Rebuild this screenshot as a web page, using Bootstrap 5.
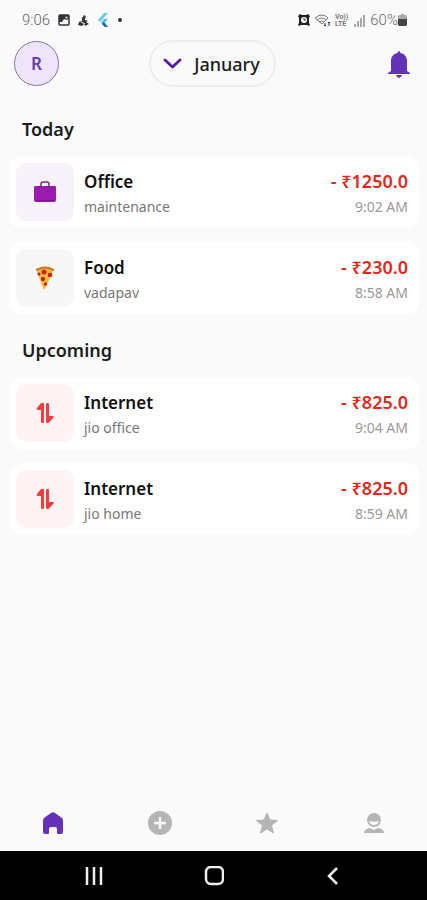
<!DOCTYPE html>
<html lang="en">
<head>
<meta charset="utf-8">
<meta name="viewport" content="width=device-width, initial-scale=1">
<title>Expenses</title>
<link href="https://cdn.jsdelivr.net/npm/bootstrap@5.3.0/dist/css/bootstrap.min.css" rel="stylesheet">
<style>
  body { background: #fafafa; color: #1b1b1b; font-family: "Noto Sans", "Open Sans", sans-serif; font-size: 16px; line-height: 24px; }
  svg { display: block; flex: none; }
  .status-strip { height: 40px; padding: 0 20px 0 22px; color: #666; font: 300 15px/20px Roboto, sans-serif; }
  .top-bar { height: 46px; display: grid; grid-template-columns: 1fr auto 1fr; align-items: center; padding: 0 16px 0 14px; }
  .avatar-btn { width: 45px; height: 45px; border: 1px solid #8a70b8; border-radius: 50%; background: #eee5fb; color: #6a3cb4; font-size: 17px; font-weight: 600; }
  .month-btn { height: 47px; border: 2px solid #eeedf3; border-radius: 24px; background: transparent; color: #1b1b1b; font-size: 18px; font-weight: 500; padding: 0 14px 0 12px; }
  .bell-btn { border: 0; background: none; padding: 0; justify-self: end; }
  .group-title { font-size: 18px; line-height: 24px; font-weight: 600; margin: 0 0 15px 13px; }
  .entries { padding: 31px 8px 0 9px; }
  .entry { background: #fff; border-radius: 12px; padding: 7px 11px 7px 7px; }
  .entry + .entry { margin-top: 14px; }
  .group + .group { margin-top: 24px; }
  .tile { width: 58px; height: 58px; border-radius: 10px; margin-right: 10px; }
  .tile-office { background: #f8f2fb; }
  .tile-food { background: #f7f7f7; }
  .tile-net { background: #fff3f5; }
  .entry-text { padding-top: 4px; line-height: 25px; }
  .entry-name { font-size: 17px; font-weight: 600; color: #111; }
  .entry-note { font-size: 14px; color: #777; }
  .entry-time { font-size: 14px; color: #999; }
  .entry-sum { font-size: 18px; font-weight: 600; color: #de2a1c; }
  .tabs a { color: #b5b5b5; height: 57px; }
  .tabs a.active { color: #6432b8; }
  .system-bar { background: #000; height: 49px; padding: 0 34px; }
  .system-bar button { border: 0; background: none; padding: 0; color: #eee; }
</style>
</head>
<body>
<div class="min-vh-100 d-flex flex-column">
  <div class="status-strip d-flex align-items-center justify-content-between">
    <div class="d-flex align-items-center">
      <span>9:06</span>
      <svg class="ms-2" width="12" height="12" viewBox="0 0 12 12"><rect x="1" y="1" width="10" height="10" rx="1" fill="none" stroke="#333" stroke-width="1.5"/><path d="M1 1h10v3L9 6 6 5 4 8H1z" fill="#333"/><circle cx="8.500" cy="3.500" r="1" fill="#fafafa"/></svg>
      <svg class="ms-2" width="11" height="13" viewBox="0 0 11 13"><path d="M6 1C9 2 7 4 7 6l3 1-2 1 3 2-4 2-1-2-2 2-4-1 1-3 3-1V4H3l2-1z" fill="#333"/><path d="M3 8l4 2" stroke="#fafafa"/></svg>
      <svg class="ms-2" width="12" height="15" viewBox="0 0 12 15"><path d="M7 0h4L3 9 1 7z" fill="#62c8f5"/><path d="M7 6h4L7 10l4 4H8L4 10z" fill="#4cb9ef"/><path d="M5 11l2-2 4 5H8z" fill="#1767a8"/></svg>
      <svg class="ms-2" width="6" height="6" viewBox="0 0 6 6"><circle cx="3" cy="3" r="2" fill="#333"/></svg>
    </div>
    <div class="d-flex align-items-center">
      <svg width="12" height="12" viewBox="0 0 12 12"><path d="M0 2l2-2 2 1h4l2-1 2 2-1 2v5l1 2-1 1-2-1H3l-2 1-1-1 1-2V4z" fill="#222"/><circle cx="6" cy="6" r="3" fill="#fafafa"/><path d="M6 4v2h2" fill="none" stroke="#222"/></svg>
      <svg class="ms-1" width="17" height="13" viewBox="0 0 17 13" fill="none" stroke="#777"><path d="M1 4q7-6 13 0L8 10z"/><path d="M3 6q5-4 9 0M5 8q3-2 5 0"/><path d="M11 9v3M10 11l1 1 1-1M15 12V8M14 9l1-1 1 1" stroke="#333"/></svg>
      <svg class="ms-1" width="14" height="14" viewBox="0 0 14 14" fill="#777" font-family="Roboto, sans-serif" font-size="7" font-weight="700"><text x="0" y="6">Vo))</text><text x="0" y="13">LTE</text></svg>
      <svg class="ms-1" width="13" height="13" viewBox="0 0 13 13" fill="#aaa"><path d="M1 10h2v3H1zM4 7h2v6H4zM7 4h2v9H7zM10 1h2v12h-2z"/></svg>
      <span class="ms-1">60%</span>
      <svg width="9" height="12" viewBox="0 0 9 12"><path d="M3 0h3v1h2l1 1v3H0V2l1-1h2z" fill="#aaa"/><path d="M0 5h9v6l-1 1H1l-1-1z" fill="#444"/></svg>
    </div>
  </div>

  <header class="top-bar">
    <button type="button" class="avatar-btn" aria-label="Profile">R</button>
    <button type="button" class="month-btn d-flex align-items-center">
      <svg width="19" height="12" viewBox="0 0 19 12"><path d="M2 2l7.500 7L17 2" fill="none" stroke="#5a1ea8" stroke-width="3" stroke-linecap="round" stroke-linejoin="round"/></svg>
      <span class="ms-2 ps-1">January</span>
    </button>
    <button type="button" class="bell-btn" aria-label="Notifications">
      <svg width="24" height="28" viewBox="0 0 24 28" fill="#6432b8"><path d="M12 1c1 0 1 1 1.500 2C18 4 20 7 20 11v10l3 2v1H1v-1l3-2V11c0-4 2-7 6.500-8C11 2 11 1 12 1z"/><path d="M9 25h6q-1 3-3 3t-3-3z"/></svg>
    </button>
  </header>

  <main class="entries flex-grow-1">
    <section class="group">
      <h2 class="group-title">Today</h2>
      <article class="entry d-flex align-items-center">
        <div class="tile tile-office d-flex align-items-center justify-content-center">
          <svg width="22" height="22" viewBox="0 0 22 22"><path d="M7 5V3q0-2 2-2h4q2 0 2 2v2" fill="none" stroke="#80238f" stroke-width="1.500"/><rect y="5" width="22" height="16" rx="2" fill="#9c1bb0"/><path d="M1 19.500h20" stroke="#7b168c"/><path d="M0 6h22" stroke="#86209a"/></svg>
        </div>
        <div class="entry-text flex-grow-1"><div class="entry-name">Office</div><div class="entry-note">maintenance</div></div>
        <div class="entry-text text-end"><div class="entry-sum">- ₹1250.0</div><div class="entry-time">9:02 AM</div></div>
      </article>
      <article class="entry d-flex align-items-center">
        <div class="tile tile-food d-flex align-items-center justify-content-center">
          <svg width="20" height="24" viewBox="0 0 20 24"><path d="M1 3q9-5 18 0l-9 20q-1 1-2-1z" fill="#f6b93b"/><path d="M1 3q9-5 18 0v2Q10 0 1 5z" fill="#c9772a"/><g fill="#c5221c"><circle cx="9" cy="6" r="2.500"/><circle cx="15" cy="9" r="2.300"/><circle cx="8" cy="13" r="2.200"/><circle cx="4" cy="8" r="1.500"/><circle cx="10.500" cy="18" r="1.700"/></g></svg>
        </div>
        <div class="entry-text flex-grow-1"><div class="entry-name">Food</div><div class="entry-note">vadapav</div></div>
        <div class="entry-text text-end"><div class="entry-sum">- ₹230.0</div><div class="entry-time">8:58 AM</div></div>
      </article>
    </section>

    <section class="group">
      <h2 class="group-title">Upcoming</h2>
      <article class="entry d-flex align-items-center">
        <div class="tile tile-net d-flex align-items-center justify-content-center">
          <svg width="18" height="22" viewBox="0 0 18 22" fill="#ee3f3f"><path d="M4.500 1.500Q8 0 8 2v18q0 1-1.500 1T5 20V8H2Q0 8 1 6zM10 2q0-1 1.500-1T13 2v12h4q1.500 0 .5 1.500L13 20.500q-3 1.500-3-1z"/></svg>
        </div>
        <div class="entry-text flex-grow-1"><div class="entry-name">Internet</div><div class="entry-note">jio office</div></div>
        <div class="entry-text text-end"><div class="entry-sum">- ₹825.0</div><div class="entry-time">9:04 AM</div></div>
      </article>
      <article class="entry d-flex align-items-center">
        <div class="tile tile-net d-flex align-items-center justify-content-center">
          <svg width="18" height="22" viewBox="0 0 18 22" fill="#ee3f3f"><path d="M4.500 1.500Q8 0 8 2v18q0 1-1.500 1T5 20V8H2Q0 8 1 6zM10 2q0-1 1.500-1T13 2v12h4q1.500 0 .5 1.500L13 20.500q-3 1.500-3-1z"/></svg>
        </div>
        <div class="entry-text flex-grow-1"><div class="entry-name">Internet</div><div class="entry-note">jio home</div></div>
        <div class="entry-text text-end"><div class="entry-sum">- ₹825.0</div><div class="entry-time">8:59 AM</div></div>
      </article>
    </section>
  </main>

  <nav class="tabs row g-0" aria-label="Main">
    <a href="#home" class="col active d-flex align-items-center justify-content-center" aria-label="Home"><svg width="22" height="24" viewBox="0 0 22 24" fill="currentColor"><path d="M9 2q2-1.500 4 0l7 5q1 1 1 3v11q0 2-2 2h-3q-1 0-1-1v-4q0-2-2-2H9q-2 0-2 2v4q0 1-1 1H3q-2 0-2-2V10q0-2 1-3z"/></svg></a>
    <a href="#add" class="col d-flex align-items-center justify-content-center" aria-label="Add"><svg width="24" height="24" viewBox="0 0 24 24"><circle cx="12" cy="12" r="12" fill="currentColor"/><path d="M12 6v12M6 12h12" stroke="#fafafa" stroke-width="2.500"/></svg></a>
    <a href="#favourites" class="col d-flex align-items-center justify-content-center" aria-label="Favourites"><svg width="24" height="24" viewBox="0 0 24 24" fill="currentColor" stroke="currentColor" stroke-linejoin="round"><path d="M12 2l3 7 7.500.5-6 5 2 7.500-6.500-4-6.500 4 2-7.500-6-5L9 9z"/></svg></a>
    <a href="#account" class="col d-flex align-items-center justify-content-center" aria-label="Account"><svg width="20" height="22" viewBox="0 0 20 22" fill="currentColor"><circle cx="10" cy="8" r="7"/><path d="M0 21q0-4 6-5l4 2 4-2q6 1 6 5z"/><path d="M5 9q5 1.500 10 0-1 4-5 4T5 9z" fill="#fafafa"/></svg></a>
  </nav>
  <div class="system-bar row g-0 align-items-center">
    <button type="button" class="col d-flex justify-content-center" aria-label="Recent apps"><svg width="18" height="20" viewBox="0 0 18 20" stroke="currentColor" stroke-width="2.500"><path d="M2 1v18M9 1v18M16 1v18"/></svg></button>
    <button type="button" class="col d-flex justify-content-center" aria-label="Home screen"><svg width="20" height="20" viewBox="0 0 20 20"><rect x="2" y="1" width="17" height="17" rx="5" fill="none" stroke="currentColor" stroke-width="2.500"/></svg></button>
    <button type="button" class="col d-flex justify-content-center" aria-label="Back"><svg width="12" height="20" viewBox="0 0 12 20"><path d="M10 2l-8 8 8 8" fill="none" stroke="currentColor" stroke-width="2.500"/></svg></button>
  </div>
</div>
<script src="https://cdn.jsdelivr.net/npm/bootstrap@5.3.0/dist/js/bootstrap.bundle.min.js"></script>
</body>
</html>
